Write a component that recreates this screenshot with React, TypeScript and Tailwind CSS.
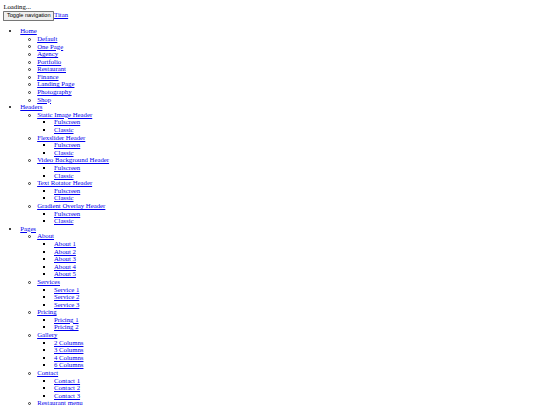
import React from 'react';

type Item = { label: string; children?: Item[] };

const menu: Item[] = [
  {
    label: 'Home',
    children: ['Default', 'One Page', 'Agency', 'Portfolio', 'Restaurant', 'Finance', 'Landing Page', 'Photography', 'Shop'].map((label) => ({ label })),
  },
  {
    label: 'Headers',
    children: ['Static Image Header', 'Flexslider Header', 'Video Background Header', 'Text Rotator Header', 'Gradient Overlay Header'].map((label) => ({
      label,
      children: [{ label: 'Fulscreen' }, { label: 'Classic' }],
    })),
  },
  {
    label: 'Pages',
    children: [
      { label: 'About', children: ['About 1', 'About 2', 'About 3', 'About 4', 'About 5'].map((label) => ({ label })) },
      { label: 'Services', children: ['Service 1', 'Service 2', 'Service 3'].map((label) => ({ label })) },
      { label: 'Pricing', children: ['Pricing 1', 'Pricing 2'].map((label) => ({ label })) },
      { label: 'Gallery', children: ['2 Columns', '3 Columns', '4 Columns', '6 Columns'].map((label) => ({ label })) },
      { label: 'Contact', children: ['Contact 1', 'Contact 2', 'Contact 3'].map((label) => ({ label })) },
      { label: 'Restaurant menu', children: ['Menu 2 Columns', 'Menu 3 Columns'].map((label) => ({ label })) },
      { label: 'Login / Signup' },
      { label: 'FAQ' },
      { label: '404' },
    ],
  },
];

const Link: React.FC<{ children: React.ReactNode }> = ({ children }) => (
  <a href="#" className="text-[#0000ee] underline">
    {children}
  </a>
);

const MenuList: React.FC<{ items: Item[]; depth: number }> = ({ items, depth }) => {
  // browser default bullets: disc, (hollow) circle, square
  const bullet = depth === 0 ? 'list-disc my-4' : depth === 1 ? 'list-none' : 'list-[square]';
  return (
    <ul className={`${bullet} pl-10`}>
      {items.map((item) => (
        <li key={item.label}>
          {depth === 1 && (
            <span className="-ml-[21px] mr-[14px] inline-block h-[7px] w-[7px] rounded-full border-[1.5px] border-[#333] align-middle" />
          )}
          <Link>{item.label}</Link>
          {item.children && <MenuList items={item.children} depth={depth + 1} />}
        </li>
      ))}
    </ul>
  );
};

export default function App() {
  return (
    <div className="bg-white text-black [zoom:0.421875]">
      <div className="m-2 text-base leading-[18px] font-['Liberation_Serif',serif]">
        <div>Loading...</div>
        <nav>
          <div className="leading-[18px]">
            <button
              type="button"
              className="rounded-[2px] border border-[#767676] bg-[#efefef] px-1.5 py-px font-['Liberation_Sans',Arial,sans-serif] text-[13.333px] leading-[16px] text-black"
            >
              Toggle navigation
            </button>
            <Link>Titan</Link>
          </div>
          <MenuList items={menu} depth={0} />
        </nav>
      </div>
    </div>
  );
}
